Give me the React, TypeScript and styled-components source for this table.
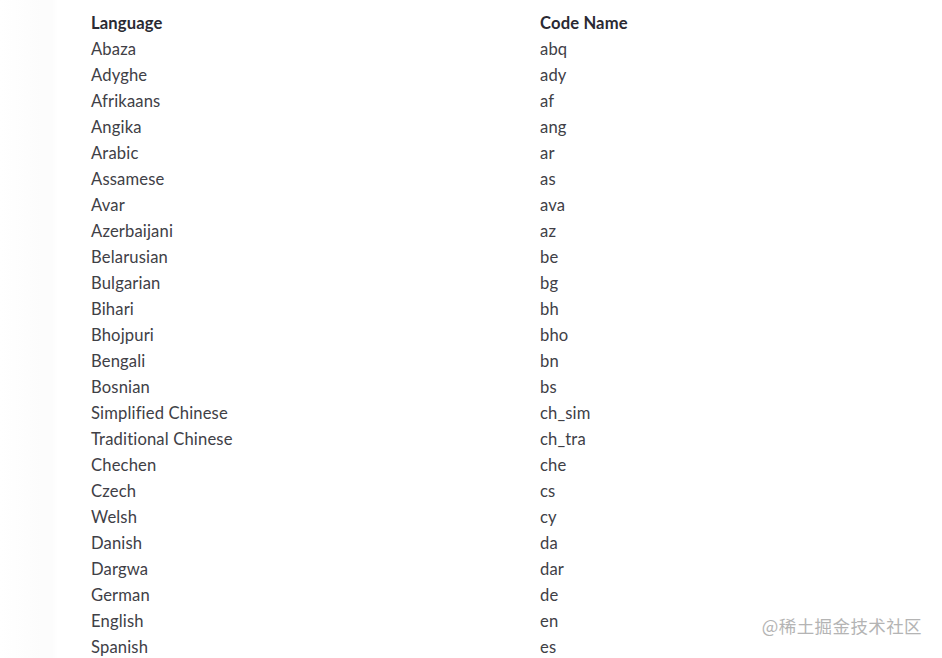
import React from "react";
import styled, { createGlobalStyle } from "styled-components";

const Global = createGlobalStyle`
  html, body { margin: 0; padding: 0; background: #ffffff; }
  body { font-family: "Lato", "Noto Sans", sans-serif; }
`;

const Page = styled.div`
  position: relative;
  width: 942px;
  height: 658px;
  overflow: hidden;
  background: linear-gradient(to right, #ffffff 0px, #fcfcfc 42px, #fcfcfc 52px, #ffffff 58px);
`;

const Table = styled.div`
  display: grid;
  grid-template-columns: 449px 1fr;
  padding: 10px 0 0 91px;
`;

const Cell = styled.div<{ $head?: boolean }>`
  height: 26px;
  line-height: 26px;
  font-size: 16.6px;
  letter-spacing: 0.15px;
  font-weight: ${(p) => (p.$head ? 700 : 400)};
  color: ${(p) => (p.$head ? "#2a2a33" : "#404046")};
  white-space: nowrap;
`;

const Watermark = styled.div`
  position: absolute;
  right: 20px;
  bottom: 20px;
  font-family: "Noto Sans CJK SC", sans-serif;
  font-size: 17.5px;
  color: #b4b4b4;
  letter-spacing: 0.4px;
`;

const rows: [string, string][] = [
  ["Abaza", "abq"],
  ["Adyghe", "ady"],
  ["Afrikaans", "af"],
  ["Angika", "ang"],
  ["Arabic", "ar"],
  ["Assamese", "as"],
  ["Avar", "ava"],
  ["Azerbaijani", "az"],
  ["Belarusian", "be"],
  ["Bulgarian", "bg"],
  ["Bihari", "bh"],
  ["Bhojpuri", "bho"],
  ["Bengali", "bn"],
  ["Bosnian", "bs"],
  ["Simplified Chinese", "ch_sim"],
  ["Traditional Chinese", "ch_tra"],
  ["Chechen", "che"],
  ["Czech", "cs"],
  ["Welsh", "cy"],
  ["Danish", "da"],
  ["Dargwa", "dar"],
  ["German", "de"],
  ["English", "en"],
  ["Spanish", "es"],
];

export default function App() {
  return (
    <Page>
      <Global />
      <Table>
        <Cell $head>Language</Cell>
        <Cell $head>Code Name</Cell>
        {rows.map(([l, c]) => (
          <React.Fragment key={c}>
            <Cell>{l}</Cell>
            <Cell>{c}</Cell>
          </React.Fragment>
        ))}
      </Table>
      <Watermark>@稀土掘金技术社区</Watermark>
    </Page>
  );
}
